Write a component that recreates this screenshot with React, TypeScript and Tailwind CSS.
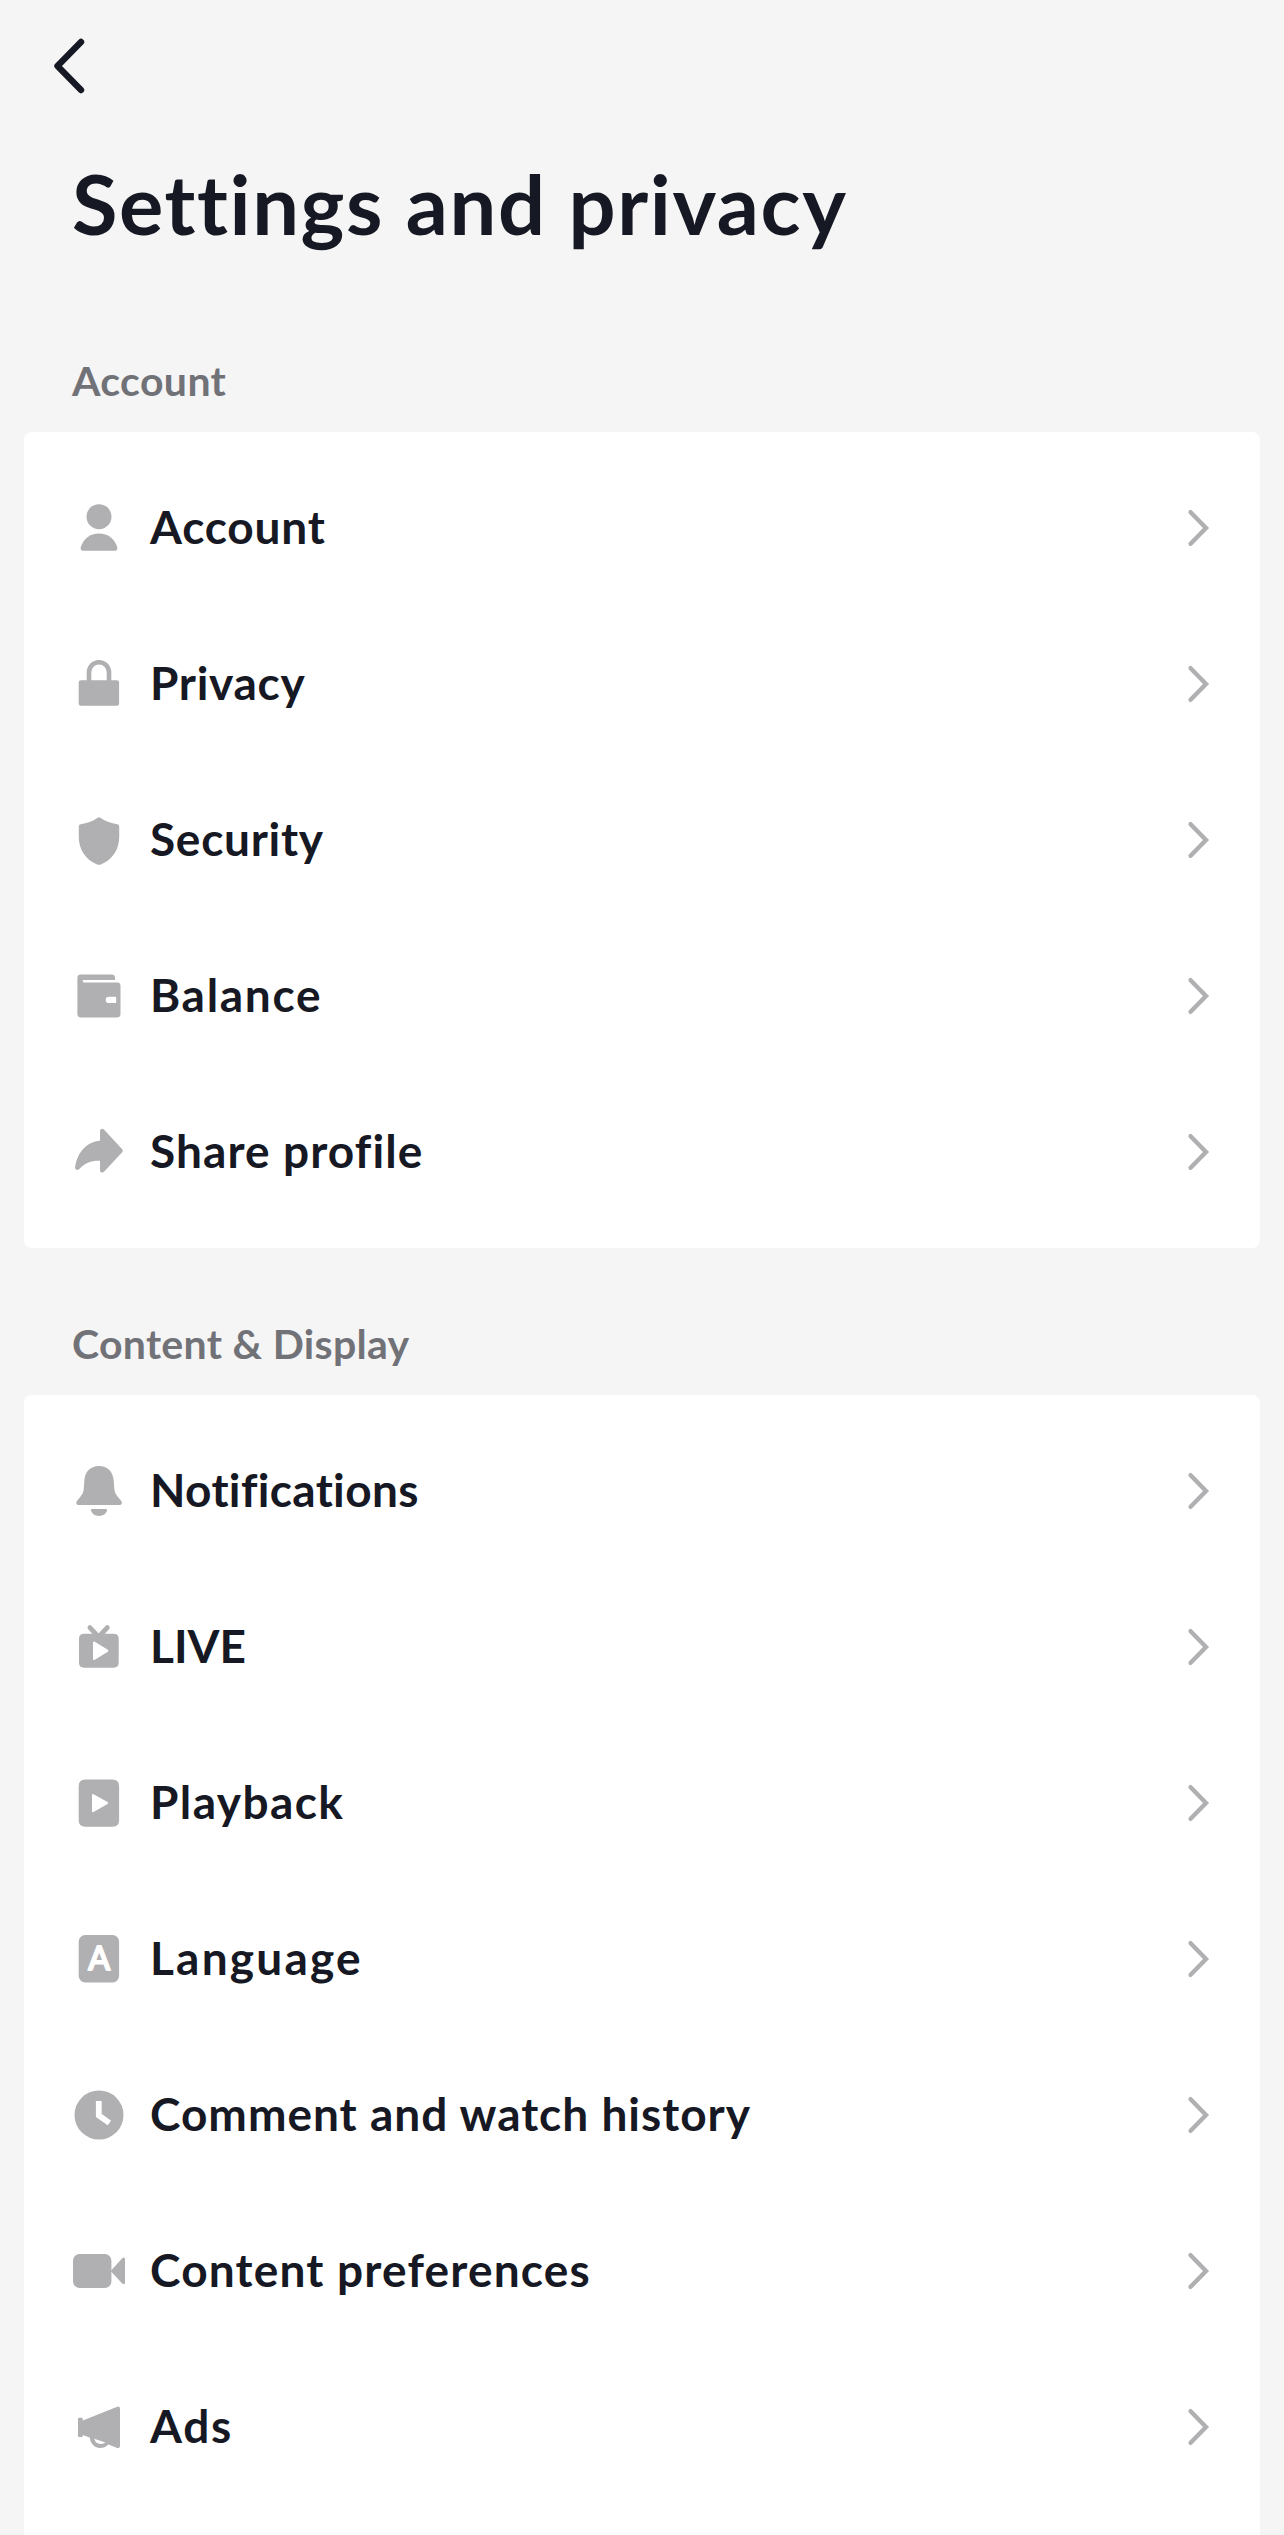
import type { ReactNode } from "react";

type Item = { label: string; tracking: string; icon: ReactNode };

const accountItems: Item[] = [
  {
    label: "Account",
    tracking: "tracking-[0.8px]",
    icon: (
      <>
        <circle cx="27" cy="15.7" r="12.5" />
        <path d="M27 32.4C36 32.4 42.6 37.7 45.2 46C45.8 48.2 44.9 49.8 42.8 49.8H11.2C9.1 49.8 8.2 48.2 8.8 46C11.4 37.7 18 32.4 27 32.4Z" />
      </>
    ),
  },
  {
    label: "Privacy",
    tracking: "tracking-[0.7px]",
    icon: (
      <>
        <path d="M17 25V15.3A10 10 0 0 1 37 15.3V25" fill="none" stroke="currentColor" strokeWidth="4.6" />
        <rect x="6.7" y="23.2" width="40.4" height="25.6" rx="2.2" />
      </>
    ),
  },
  {
    label: "Security",
    tracking: "tracking-[0.7px]",
    icon: (
      <path d="M25.6 4.8Q27 3.8 28.4 4.8C33.5 8.6 39 10.3 45.4 11.2Q47.2 11.5 47.2 13.4V24C47.2 37 40 46.8 29.4 51.2Q27 52.2 24.6 51.2C14 46.8 6.8 37 6.8 24V13.4Q6.8 11.5 8.6 11.2C15 10.3 20.5 8.6 25.6 4.8Z" />
    ),
  },
  {
    label: "Balance",
    tracking: "tracking-[1.7px]",
    icon: (
      <path
        fillRule="evenodd"
        d="M8.8 5.4H39.6Q43 5.4 43 8.8V11H11.6Q10.8 11 10.8 11.8V12.6Q10.8 13.4 11.6 13.4H45.2Q48.5 13.4 48.5 16.8V45Q48.5 48.4 45.2 48.4H8.8Q5.4 48.4 5.4 45V8.8Q5.4 5.4 8.8 5.4ZM36.8 27.8A3.1 3.1 0 0 0 36.8 34H43.6Q44.2 34 44.2 33.4V28.4Q44.2 27.8 43.6 27.8Z"
      />
    ),
  },
  {
    label: "Share profile",
    tracking: "tracking-[1.1px]",
    icon: (
      <path d="M28 6.2C28 3.8 30.6 3 32.2 4.7L50.2 24.2Q51.6 25.7 50.2 27.2L32.2 46.6C30.6 48.3 28 47.5 28 45.2V35.7C19.5 35.4 12.8 37.8 7.8 43.6C5.5 46.2 2.8 45 3.1 41.8C5.8 26.4 15.5 16.6 28 15.8Z" />
    ),
  },
];

const contentItems: Item[] = [
  {
    label: "Notifications",
    tracking: "tracking-[0.35px]",
    icon: (
      <>
        <path d="M27 2C35.2 2 41 7.7 41.6 15.8L42.3 24.5C42.6 28.3 43.6 30.2 46.2 33.2L48.9 36.4C50.8 38.7 49.7 41 47.2 41H7C4.4 41 3.4 38.7 5.3 36.4L8 33.2C10.5 30.2 11.5 28.3 11.8 24.5L12.4 15.8C13 7.7 18.8 2 27 2Z" />
        <path d="M20 45H34Q35.2 45 35 46.3C34.3 49.7 31.2 52 27 52C22.8 52 19.7 49.7 19 46.3Q18.8 45 20 45Z" />
      </>
    ),
  },
  {
    label: "LIVE",
    tracking: "tracking-[0px]",
    icon: (
      <>
        <path d="M17.9 7.6L26.6 17L35.3 7.6" fill="none" stroke="currentColor" strokeWidth="4.8" strokeLinecap="round" />
        <path
          fillRule="evenodd"
          d="M12.2 13.7H41.6Q46.7 13.7 46.7 18.8V42.6Q46.7 47.8 41.6 47.8H12.2Q7 47.8 7 42.6V18.8Q7 13.7 12.2 13.7ZM21 22.6V38.8Q21 40.6 22.8 39.7L35.8 31.8Q37.2 30.8 35.8 29.8L22.8 21.7Q21 20.8 21 22.6Z"
        />
      </>
    ),
  },
  {
    label: "Playback",
    tracking: "tracking-[1.4px]",
    icon: (
      <path
        fillRule="evenodd"
        d="M13.2 3.4H40.6Q47.1 3.4 47.1 9.9V44.2Q47.1 50.7 40.6 50.7H13.2Q6.7 50.7 6.7 44.2V9.9Q6.7 3.4 13.2 3.4ZM20 19.2V35.2Q20 36.8 21.6 36.1L35.5 28Q37 27 35.5 26L21.6 18.2Q20 17.4 20 19.2Z"
      />
    ),
  },
  {
    label: "Language",
    tracking: "tracking-[2.2px]",
    icon: (
      <>
        <rect x="6.7" y="3.1" width="40.4" height="47.3" rx="6.5" />
        <text
          x="27.2"
          y="38"
          textAnchor="middle"
          fill="white"
          stroke="white"
          strokeWidth="1.8"
          strokeLinejoin="round"
          className="text-[32px] font-medium"
        >
          A
        </text>
      </>
    ),
  },
  {
    label: "Comment and watch history",
    tracking: "tracking-[1px]",
    icon: (
      <>
        <circle cx="27" cy="27" r="24.5" />
        <path d="M26.8 13V27.4L37.4 35" fill="none" stroke="white" strokeWidth="5.8" />
      </>
    ),
  },
  {
    label: "Content preferences",
    tracking: "tracking-[1.2px]",
    icon: (
      <>
        <rect x="1" y="10" width="38.4" height="34" rx="6.5" />
        <path d="M38.6 26.9L50 14.6Q53 12 53 15.6V38.2Q53 41.8 50 39.2Z" />
      </>
    ),
  },
  {
    label: "Ads",
    tracking: "tracking-[1.7px]",
    icon: (
      <>
        <path d="M7.2 17.7H9.6Q10.8 17.7 10.8 18.9V20.4L44.6 6.9Q48 5.6 48 9V45.8Q48 49 44.6 47.8L37 44.8L10.8 35V35.8Q10.8 37 9.6 37H7.2Q6 37 6 35.8V18.9Q6 17.7 7.2 17.7Z" />
        <path d="M19.8 36C20 42 23.4 45.8 28 45.8C31 45.8 33.4 44.6 35 42.4" fill="none" stroke="currentColor" strokeWidth="4.4" />
        <path d="M22.3 38.8L33.4 42.6C30 45 24 44.2 22.3 38.8Z" fill="white" />
      </>
    ),
  },
];

function Row({ label, tracking, icon }: Item) {
  return (
    <button className="flex h-39 w-full items-center pr-[50px] pl-12 text-left">
      <svg viewBox="0 0 54 54" fill="currentColor" className="size-[54px] shrink-0 text-[#b0b0b2]">
        {icon}
      </svg>
      <span className={`grow pb-[3px] pl-6 text-[46px] leading-none font-bold whitespace-nowrap ${tracking}`}>
        {label}
      </span>
      <svg viewBox="0 0 24 40" fill="none" className="h-10 w-6 shrink-0 text-[#b0b0b2]">
        <path d="M4.6 4.2L20 20L4.6 35.8" stroke="currentColor" strokeWidth="4.4" strokeLinecap="round" />
      </svg>
    </button>
  );
}

export default function App() {
  return (
    <div className="flex min-h-[2535px] w-full flex-col bg-[#f5f5f5] font-['Lato',sans-serif] text-[#161823]">
      <header className="flex h-33 items-center pl-12">
        <button aria-label="Back">
          <svg viewBox="0 0 42 60" fill="none" className="h-15 w-[42px]">
            <path d="M33 6L9.5 30L33 54" stroke="currentColor" strokeWidth="6.4" strokeLinecap="round" strokeLinejoin="round" />
          </svg>
        </button>
      </header>
      <h1 className="mt-[23px] pl-18 text-[83px] leading-24 font-bold tracking-[1.6px]">Settings and privacy</h1>

      <h2 className="mt-[106px] mb-[27px] pl-18 text-[41px] leading-12 font-bold tracking-[0.4px] text-[#717278]">
        Account
      </h2>
      <section className="mx-6 rounded-lg bg-white py-[18px]">
        {accountItems.map((item) => (
          <Row key={item.label} {...item} />
        ))}
      </section>

      <h2 className="mt-[72px] mb-[27px] pl-18 text-[41px] leading-12 font-bold tracking-[0.3px] text-[#717278]">
        Content &amp; Display
      </h2>
      <section className="mx-6 grow rounded-t-lg bg-white pt-[18px]">
        {contentItems.map((item) => (
          <Row key={item.label} {...item} />
        ))}
      </section>
    </div>
  );
}
